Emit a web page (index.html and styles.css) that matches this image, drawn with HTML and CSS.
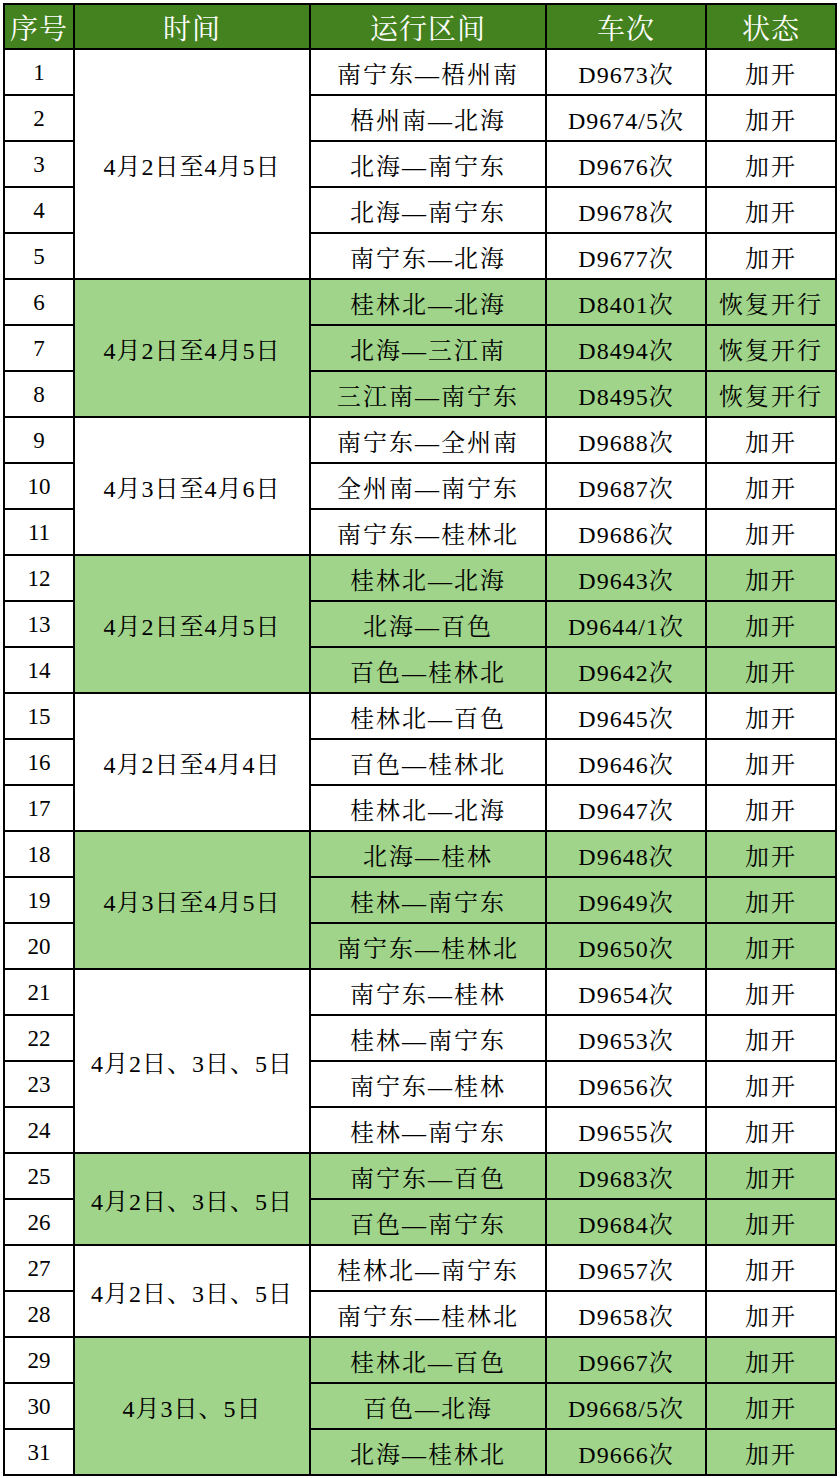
FILE: index.html
```html
<!DOCTYPE html>
<html lang="zh-CN">
<head>
<meta charset="utf-8">
<title>列车开行表</title>
<link rel="stylesheet" href="styles.css">
</head>
<body>
<table class="sched">
<colgroup>
<col class="c-no"><col class="c-date"><col class="c-route"><col class="c-train"><col class="c-state">
</colgroup>
<thead>
<tr><th>序号</th><th>时间</th><th>运行区间</th><th>车次</th><th>状态</th></tr>
</thead>
<tbody>
<tr><td class="no">1</td><td class="date" rowspan="5">4月2日至4月5日</td><td class="route">南宁东—梧州南</td><td class="train">D9673次</td><td class="state">加开</td></tr>
<tr><td class="no">2</td><td class="route">梧州南—北海</td><td class="train">D9674/5次</td><td class="state">加开</td></tr>
<tr><td class="no">3</td><td class="route">北海—南宁东</td><td class="train">D9676次</td><td class="state">加开</td></tr>
<tr><td class="no">4</td><td class="route">北海—南宁东</td><td class="train">D9678次</td><td class="state">加开</td></tr>
<tr><td class="no">5</td><td class="route">南宁东—北海</td><td class="train">D9677次</td><td class="state">加开</td></tr>

<tr class="g"><td class="no">6</td><td class="date" rowspan="3">4月2日至4月5日</td><td class="route">桂林北—北海</td><td class="train">D8401次</td><td class="state">恢复开行</td></tr>
<tr class="g"><td class="no">7</td><td class="route">北海—三江南</td><td class="train">D8494次</td><td class="state">恢复开行</td></tr>
<tr class="g"><td class="no">8</td><td class="route">三江南—南宁东</td><td class="train">D8495次</td><td class="state">恢复开行</td></tr>

<tr><td class="no">9</td><td class="date" rowspan="3">4月3日至4月6日</td><td class="route">南宁东—全州南</td><td class="train">D9688次</td><td class="state">加开</td></tr>
<tr><td class="no">10</td><td class="route">全州南—南宁东</td><td class="train">D9687次</td><td class="state">加开</td></tr>
<tr><td class="no">11</td><td class="route">南宁东—桂林北</td><td class="train">D9686次</td><td class="state">加开</td></tr>

<tr class="g"><td class="no">12</td><td class="date" rowspan="3">4月2日至4月5日</td><td class="route">桂林北—北海</td><td class="train">D9643次</td><td class="state">加开</td></tr>
<tr class="g"><td class="no">13</td><td class="route">北海—百色</td><td class="train">D9644/1次</td><td class="state">加开</td></tr>
<tr class="g"><td class="no">14</td><td class="route">百色—桂林北</td><td class="train">D9642次</td><td class="state">加开</td></tr>

<tr><td class="no">15</td><td class="date" rowspan="3">4月2日至4月4日</td><td class="route">桂林北—百色</td><td class="train">D9645次</td><td class="state">加开</td></tr>
<tr><td class="no">16</td><td class="route">百色—桂林北</td><td class="train">D9646次</td><td class="state">加开</td></tr>
<tr><td class="no">17</td><td class="route">桂林北—北海</td><td class="train">D9647次</td><td class="state">加开</td></tr>

<tr class="g"><td class="no">18</td><td class="date" rowspan="3">4月3日至4月5日</td><td class="route">北海—桂林</td><td class="train">D9648次</td><td class="state">加开</td></tr>
<tr class="g"><td class="no">19</td><td class="route">桂林—南宁东</td><td class="train">D9649次</td><td class="state">加开</td></tr>
<tr class="g"><td class="no">20</td><td class="route">南宁东—桂林北</td><td class="train">D9650次</td><td class="state">加开</td></tr>

<tr><td class="no">21</td><td class="date" rowspan="4">4月2日、3日、5日</td><td class="route">南宁东—桂林</td><td class="train">D9654次</td><td class="state">加开</td></tr>
<tr><td class="no">22</td><td class="route">桂林—南宁东</td><td class="train">D9653次</td><td class="state">加开</td></tr>
<tr><td class="no">23</td><td class="route">南宁东—桂林</td><td class="train">D9656次</td><td class="state">加开</td></tr>
<tr><td class="no">24</td><td class="route">桂林—南宁东</td><td class="train">D9655次</td><td class="state">加开</td></tr>

<tr class="g"><td class="no">25</td><td class="date" rowspan="2">4月2日、3日、5日</td><td class="route">南宁东—百色</td><td class="train">D9683次</td><td class="state">加开</td></tr>
<tr class="g"><td class="no">26</td><td class="route">百色—南宁东</td><td class="train">D9684次</td><td class="state">加开</td></tr>

<tr><td class="no">27</td><td class="date" rowspan="2">4月2日、3日、5日</td><td class="route">桂林北—南宁东</td><td class="train">D9657次</td><td class="state">加开</td></tr>
<tr><td class="no">28</td><td class="route">南宁东—桂林北</td><td class="train">D9658次</td><td class="state">加开</td></tr>

<tr class="g"><td class="no">29</td><td class="date" rowspan="3">4月3日、5日</td><td class="route">桂林北—百色</td><td class="train">D9667次</td><td class="state">加开</td></tr>
<tr class="g"><td class="no">30</td><td class="route">百色—北海</td><td class="train">D9668/5次</td><td class="state">加开</td></tr>
<tr class="g"><td class="no">31</td><td class="route">北海—桂林北</td><td class="train">D9666次</td><td class="state">加开</td></tr>
</tbody>
</table>
</body>
</html>
```
FILE: styles.css
```css
html, body {
  margin: 0;
  padding: 0;
  background: #ffffff;
}
body {
  padding: 3px 0 0 3px;
  font-family: "Liberation Serif", "Noto Serif CJK SC", "Noto Sans CJK SC", serif;
  color: #000;
}
.sched {
  border-collapse: collapse;
  table-layout: fixed;
  width: 834px;
  border: 2px solid #000;
}
.c-no { width: 70px; }
.c-date { width: 236px; }
.c-route { width: 236px; }
.c-train { width: 160px; }
.c-state { width: 130px; }

.sched th,
.sched td {
  border: 2px solid #000;
  padding: 0;
  text-align: center;
  vertical-align: middle;
  white-space: nowrap;
  overflow: hidden;
}
.sched th {
  height: 43px;
  background: #44821f;
  color: #fff;
  font-size: 28px;
  font-weight: normal;
  letter-spacing: 1px;
}
.sched td {
  height: 44px;
  font-size: 24px;
  background: #fff;
}
.sched td.no {
  font-size: 23px;
  padding-top: 2px;
  height: 42px;
}
.sched td.route, .sched td.state { letter-spacing: 2px; }
.sched td.date { letter-spacing: 1px; }
.sched td.train { letter-spacing: 1px; }
.sched tr.g td { background: #a0d48a; }
.sched tr.g td.no { background: #fff; }
```
